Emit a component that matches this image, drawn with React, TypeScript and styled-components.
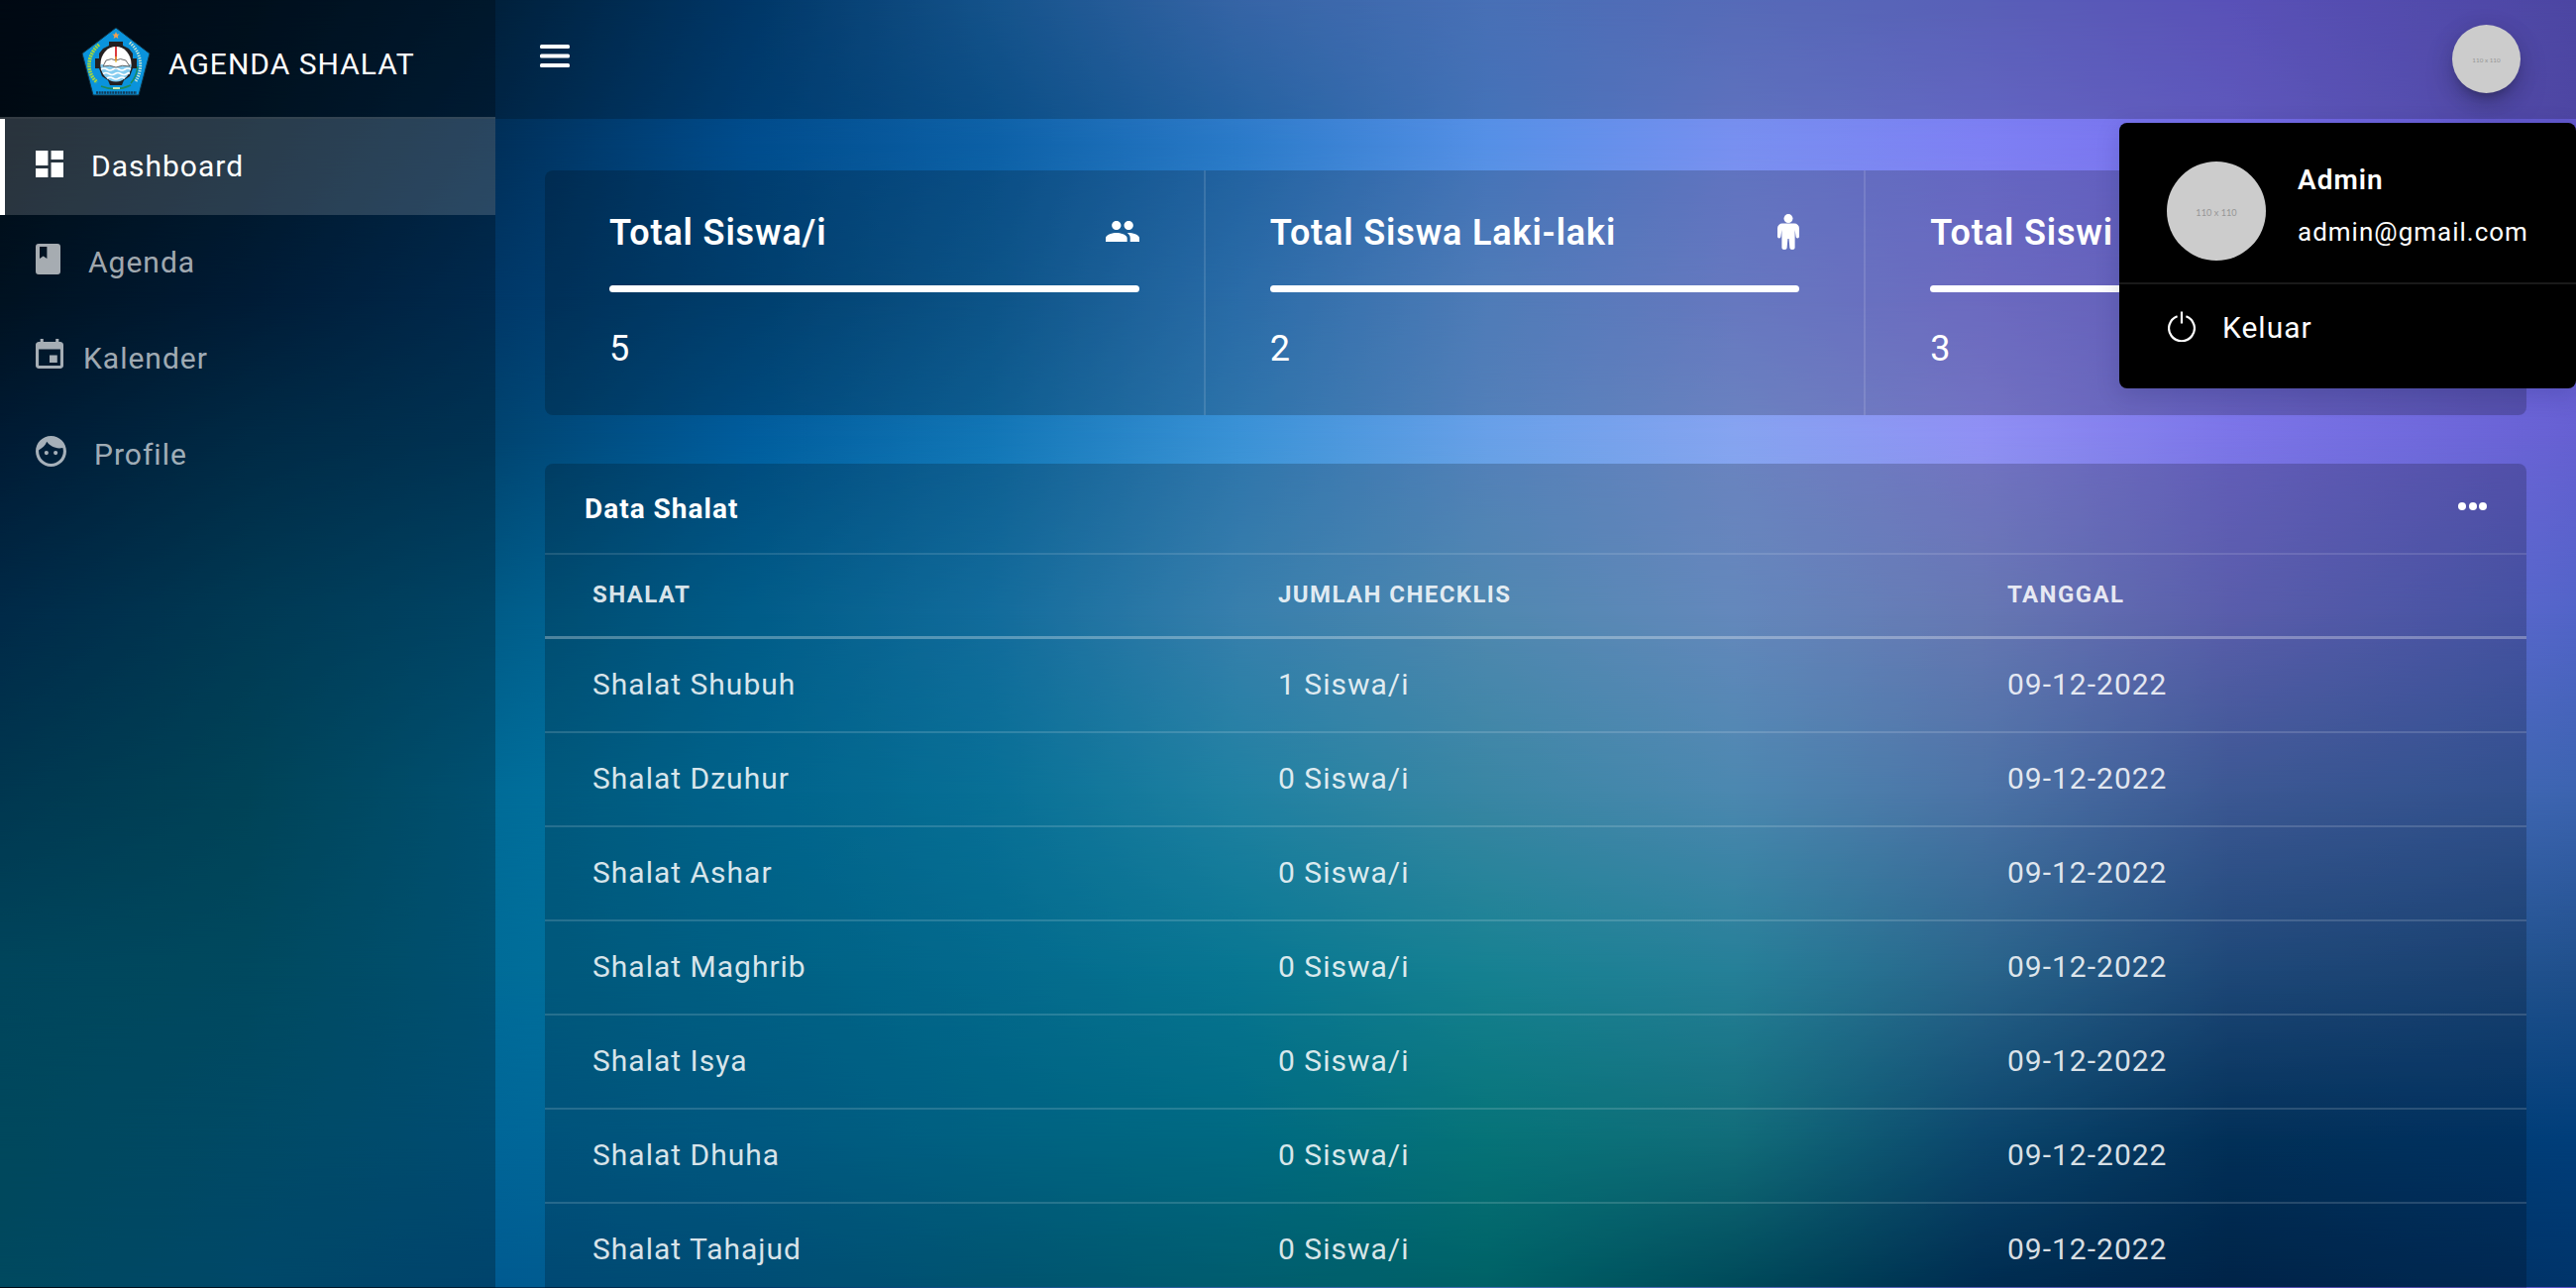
import React from "react";
import styled, { createGlobalStyle } from "styled-components";

const GlobalStyle = createGlobalStyle`
  *, *::before, *::after { box-sizing: border-box; }
  html, body { margin: 0; padding: 0; }
  body {
    background: #000;
    color: #fff;
    font-family: Roboto, "Liberation Sans", sans-serif;
    font-size: 30px;
    letter-spacing: 1px;
    overflow: hidden;
  }
`;

/* ---------- backdrop: horizontal colour bands faded into each other ---------- */

const STOPS = [0, 250, 500, 750, 1000, 1250, 1500, 1750, 2000, 2250, 2600];

const BANDS: { y: number; colors: string[] }[] = [
  { y: 0, colors: ["#001020", "#001a30", "#00294b", "#004480", "#1a68ae", "#447ed0", "#5a8ce4", "#6c86e6", "#7078e6", "#7066e6", "#6058cc"] },
  { y: 145, colors: ["#001220", "#002038", "#00305a", "#004c8c", "#0c60a6", "#2a7ac8", "#5590e6", "#7890f0", "#7e80f4", "#7870ec", "#6258cc"] },
  { y: 300, colors: ["#00182c", "#002548", "#003868", "#004e88", "#1069aa", "#3587d2", "#639be6", "#8096f0", "#8785f0", "#7a74e8", "#685ed2"] },
  { y: 440, colors: ["#002445", "#00385c", "#004470", "#005c9c", "#1276b6", "#3a92d6", "#68a0e8", "#86a4f0", "#9090f4", "#7c75e8", "#6660d2"] },
  { y: 620, colors: ["#003860", "#004d70", "#005c88", "#0073aa", "#1787c3", "#469fd8", "#64aadc", "#7daaeb", "#8096e0", "#7075d6", "#5264c8"] },
  { y: 800, colors: ["#004a6b", "#005a75", "#006c98", "#007cae", "#0a8cbc", "#28a2cb", "#48a8cd", "#5faadc", "#5f90d0", "#4b6eb8", "#3c64b0"] },
  { y: 980, colors: ["#005d7b", "#00627f", "#006c98", "#0078a5", "#0484b0", "#0a94b6", "#1ca2b6", "#2fa0be", "#347eae", "#265a96", "#20508c"] },
  { y: 1150, colors: ["#00607c", "#006388", "#006698", "#006ea0", "#007aa2", "#0084a2", "#089096", "#168898", "#0f5888", "#033c6e", "#003e7a"] },
  { y: 1300, colors: ["#00627f", "#00608c", "#005a90", "#006092", "#00688c", "#00748a", "#007a80", "#005c70", "#003764", "#002d5a", "#00346a"] },
];

const Backdrop = styled.div`
  position: absolute;
  inset: 0;
  z-index: -1;
`;

const Band = styled.div<{ $colors: string[]; $from: number; $to: number }>`
  position: absolute;
  inset: 0;
  background: linear-gradient(
    to right,
    ${(p) => p.$colors.map((c, i) => `${c} ${STOPS[i]}px`).join(", ")}
  );
  mask-image: ${(p) =>
    p.$to > 0
      ? `linear-gradient(to bottom, transparent ${p.$from}px, #000 ${p.$to}px)`
      : "none"};
`;

/* first pixel row of the repeating backdrop */
const RepeatLine = styled(Band)`
  top: auto;
  height: 1px;
`;

/* ---------- shell ---------- */

const Page = styled.div`
  position: relative;
  z-index: 0;
  display: flex;
  width: 2600px;
  height: 1300px;
  overflow: hidden;
`;

const Sidebar = styled.aside`
  flex: none;
  width: 500px;
  background: rgba(0, 0, 0, 0.25);
`;

const Brand = styled.div`
  display: flex;
  align-items: center;
  gap: 18px;
  height: 120px;
  padding: 6px 0 0 82px;
  background: rgba(0, 0, 0, 0.2);
  border-bottom: 2px solid rgba(255, 255, 255, 0.2);
`;

const BrandName = styled.h5`
  margin: 6px 0 0;
  font-size: 30px;
  font-weight: 400;
  line-height: 40px;
  white-space: nowrap;
`;

const Menu = styled.nav`
  display: flex;
  flex-direction: column;
`;

const MenuItem = styled.a<{ $active?: boolean; $gap: number }>`
  display: flex;
  align-items: flex-start;
  gap: ${(p) => p.$gap}px;
  height: 97px;
  padding: 30px 0 0 31px;
  line-height: 36px;
  color: ${(p) => (p.$active ? "#fff" : "rgba(255,255,255,0.65)")};
  background: ${(p) => (p.$active ? "rgba(255,255,255,0.16)" : "transparent")};
  border-left: 5px solid ${(p) => (p.$active ? "#fff" : "transparent")};

  svg { flex: none; }
`;

const Main = styled.main`
  display: flex;
  flex-direction: column;
  flex: 1;
  min-width: 0;
`;

const Header = styled.header`
  position: relative;
  display: flex;
  justify-content: space-between;
  align-items: flex-start;
  flex: none;
  height: 120px;
  padding: 25px 56px 0 45px;
  background: rgba(0, 0, 0, 0.2);
`;

const MenuToggle = styled.button`
  display: flex;
  margin: 20px 0 0;
  padding: 0;
  border: 0;
  background: none;
  color: #fff;
`;

const Avatar = styled.span<{ $size: number; $font: number; $shadow?: boolean }>`
  display: flex;
  flex: none;
  align-items: center;
  justify-content: center;
  width: ${(p) => p.$size}px;
  height: ${(p) => p.$size}px;
  padding-top: 2px;
  border-radius: 50%;
  background: #ccc;
  color: #969696;
  font-family: Lato, Roboto, sans-serif;
  font-size: ${(p) => p.$font}px;
  letter-spacing: 0;
  box-shadow: ${(p) =>
    p.$shadow
      ? "0 16px 38px -12px rgba(0,0,0,.4), 0 4px 25px 0 rgba(0,0,0,.12), 0 8px 10px -5px rgba(0,0,0,.2)"
      : "none"};
`;

const Dropdown = styled.div`
  position: absolute;
  top: 124px;
  right: 0;
  z-index: 2;
  width: 461px;
  height: 268px;
  border-radius: 8px;
  background: #000;
  box-shadow: 0 6px 24px rgba(8, 21, 66, 0.16);
`;

const Account = styled.div`
  display: flex;
  gap: 32px;
  height: 163px;
  padding: 39px 0 0 48px;
  border-bottom: 2px solid rgba(255, 255, 255, 0.1);
`;

const AccountName = styled.h6`
  margin: 2px 0 0;
  font-size: 28px;
  font-weight: 600;
  line-height: 34px;
`;

const AccountMail = styled.p`
  margin: 18px 0 0;
  font-size: 26px;
  line-height: 34px;
`;

const Logout = styled.a`
  display: flex;
  gap: 27px;
  padding: 25px 0 0 49px;
  line-height: 38px;
`;

const Content = styled.div`
  display: flex;
  flex-direction: column;
  gap: 49px;
  padding: 52px 50px 0;
`;

const StatCard = styled.section`
  display: grid;
  grid-template-columns: repeat(3, 1fr);
  height: 247px;
  border-radius: 8px;
  background: rgba(0, 0, 0, 0.2);
`;

const Stat = styled.div`
  padding: 40px 65px 0 65px;
  border-right: 2px solid rgba(255, 255, 255, 0.12);
  &:last-child { border-right: 0; }
`;

const StatHead = styled.div`
  display: flex;
  justify-content: space-between;
  height: 76px;
`;

const StatTitle = styled.h5`
  margin: 0;
  font-size: 36px;
  font-weight: 600;
  letter-spacing: 0.85px;
  line-height: 46px;
  white-space: nowrap;
`;

const StatIcon = styled.span<{ $top: number }>`
  display: flex;
  padding-top: ${(p) => p.$top}px;
`;

const Bar = styled.div`
  height: 7px;
  border-radius: 4px;
  background: #fff;
`;

const StatValue = styled.p`
  margin: 34px 0 0;
  font-size: 36px;
  line-height: 46px;
`;

const TableCard = styled.section`
  height: 900px;
  border-radius: 8px;
  background: rgba(0, 0, 0, 0.2);
`;

const CardHeader = styled.div`
  display: flex;
  justify-content: space-between;
  height: 92px;
  padding: 28px 40px 0 40px;
  border-bottom: 2px solid rgba(255, 255, 255, 0.12);
  font-size: 28px;
  font-weight: 700;
  letter-spacing: 1px;
  line-height: 36px;
`;

const Dots = styled.span`
  display: flex;
  gap: 2.5px;
  padding-top: 11px;
`;

const Dot = styled.i`
  width: 8px;
  height: 8px;
  border-radius: 50%;
  background: #fff;
`;

const Row = styled.div<{ $head?: boolean }>`
  display: grid;
  grid-template-columns: 692px 736px 1fr;
  height: ${(p) => (p.$head ? 85 : 95)}px;
  padding: ${(p) => (p.$head ? 22 : 28)}px 0 0 48px;
  border-bottom: ${(p) =>
    p.$head ? "3px solid rgba(255,255,255,.3)" : "2px solid rgba(255,255,255,.15)"};
  color: rgba(255, 255, 255, 0.85);
  font-size: ${(p) => (p.$head ? 24 : 30)}px;
  font-weight: ${(p) => (p.$head ? 700 : 400)};
  letter-spacing: ${(p) => (p.$head ? 1.4 : 1)}px;
  line-height: 36px;
`;

/* ---------- icons ---------- */

type IconProps = { w: number; h: number; box: string; children: React.ReactNode; dy?: number };

const Glyph = styled.svg<{ $dy: number }>`
  display: block;
  margin-top: ${(p) => p.$dy}px;
  fill: currentColor;
`;

const Icon = ({ w, h, box, children, dy = 0 }: IconProps) => (
  <Glyph width={w} height={h} viewBox={box} preserveAspectRatio="none" $dy={dy}>
    {children}
  </Glyph>
);

const DashboardIcon = () => (
  <Icon w={28} h={27} box="3 3 18 18" dy={2}>
    <path d="M3 13h8V3H3v10zm0 8h8v-6H3v6zm10 0h8V11h-8v10zm0-18v6h8V3h-8z" />
  </Icon>
);

const AgendaIcon = () => (
  <Icon w={25} h={31} box="0 0 25 31" dy={-1}>
    <path
      fillRule="evenodd"
      d="M3 0H22A3 3 0 0 1 25 3V28A3 3 0 0 1 22 31H3A3 3 0 0 1 0 28V3A3 3 0 0 1 3 0ZM4 3V15L7.7 12.6L11.4 15V3Z"
    />
  </Icon>
);

const CalendarIcon = () => (
  <Icon w={28} h={30} box="3 1 18 20" dy={-2}>
    <path d="M17 12h-5v5h5v-5zM16 1v2H8V1H6v2H5c-1.11 0-1.99.9-1.99 2L3 19c0 1.1.89 2 2 2h14c1.1 0 2-.9 2-2V5c0-1.1-.9-2-2-2h-1V1h-2zm3 18H5V8h14v11z" />
  </Icon>
);

const FaceIcon = () => (
  <Icon w={31} h={31} box="2 2 20 20" dy={-1}>
    <circle cx="9" cy="13" r="1.35" />
    <circle cx="15" cy="13" r="1.35" />
    <path d="M12 2C6.48 2 2 6.48 2 12s4.480 10 10 10 10-4.480 10-10S17.520 2 12 2zm0 18c-4.410 0-8-3.590-8-8 0-.29.02-.58.05-.86 2.360-1.050 4.230-2.980 5.210-5.370C11.070 8.330 14.050 10 17.420 10c.78 0 1.530-.09 2.250-.26.21.71.33 1.470.33 2.260 0 4.410-3.590 8-8 8z" />
  </Icon>
);

const PeopleIcon = () => (
  <Icon w={34} h={21} box="1 5 22 14">
    <path d="M16 11c1.660 0 2.990-1.340 2.990-3S17.660 5 16 5c-1.660 0-3 1.340-3 3s1.340 3 3 3zm-8 0c1.660 0 2.990-1.340 2.990-3S9.660 5 8 5C6.340 5 5 6.340 5 8s1.340 3 3 3zm0 2c-2.330 0-7 1.170-7 3.500V19h14v-2.500c0-2.330-4.670-3.500-7-3.500zm8 0c-.29 0-.62.02-.97.05 1.160.84 1.970 1.970 1.970 3.450V19h6v-2.500c0-2.330-4.670-3.500-7-3.500z" />
  </Icon>
);

const MaleIcon = () => (
  <Icon w={22} h={36} box="0 0 22 36">
    <circle cx="11" cy="4.600" r="4.500" />
    <path d="M5 9.500H17A5 5 0 0 1 22 14.500V22.700A1.700 1.700 0 0 1 18.600 22.700L17.600 16V34.200A2.600 1.800 0 0 1 12.400 34.200L11.600 25H10.400L9.600 34.200A2.600 1.800 0 0 1 4.400 34.200V16L3.400 22.700A1.700 1.700 0 0 1 0 22.700V14.500A5 5 0 0 1 5 9.500Z" />
  </Icon>
);

const PowerIcon = () => (
  <Icon w={28} h={31} box="0 0 28 31" dy={2}>
    <path
      d="M9.600 5.200A12.900 12.900 0 1 0 18.400 5.200M14 0.500V12.500"
      fill="none"
      stroke="currentColor"
      strokeWidth="2.200"
    />
  </Icon>
);

const BarsIcon = () => (
  <Icon w={30} h={23} box="0 0 30 23">
    <rect width="30" height="4" rx="1.500" />
    <rect y="9.500" width="30" height="4" rx="1.500" />
    <rect y="19" width="30" height="4" rx="1.500" />
  </Icon>
);

const Crest = () => (
  <svg width="70" height="70" viewBox="0 0 70 70">
    <path d="M35 1L69 27L58 69H12L1 27Z" fill="#0a93dc" stroke="#12313f" strokeWidth="1" />
    <path d="M35 5l1.100 2.400 2.600.2-2 1.700.7 2.600-2.400-1.400-2.400 1.400.7-2.600-2-1.700 2.600-.2Z" fill="#f0a050" />
    <path d="M18 18C5 29 5 47 16 56" fill="none" stroke="#a8d83a" strokeWidth="3.600" strokeDasharray="1.800 0.900" />
    <path d="M49 16C62 27 62 44 55 55" fill="none" stroke="#d8ecd0" strokeWidth="3" strokeDasharray="1.300 1.300" />
    <path d="M57 40Q56 50 50 57" fill="none" stroke="#1c8a5c" strokeWidth="1.600" />
    <path d="M20 60Q35 66 50 59" fill="none" stroke="#1c8a5c" strokeWidth="1.600" />
    <path
      d="M28 15H42V19L48 22L52 27V32H56V42H52L49 50L43 54L41 59H29L27 54L21 50L18 42H14V32H18V27L22 22L28 19Z"
      fill="#231f20"
    />
    <ellipse cx="35" cy="37.500" rx="15.500" ry="17.500" fill="#fff" />
    <path d="M19.500 38H50.500A15.500 17.500 0 0 1 19.500 38Z" fill="#86cdf0" />
    <g fill="none" stroke="#fff" strokeWidth="1.700">
      <path d="M20 43q3-2 6 0t6 0t6 0t6 0t6 0" />
      <path d="M22 47.500q3-2 6 0t6 0t6 0t6 0t2 0" />
      <path d="M26 52q3-2 6 0t6 0t6 0" />
    </g>
    <path d="M22 40L25 34Q31 31 35 34Q39 31 45 34L49 40Q41 38 35 41Q29 38 22 40Z" fill="#fff" stroke="#555" strokeWidth="0.900" />
    <path d="M35 20V34" stroke="#d8232a" strokeWidth="1.800" />
    <path d="M35 30V36" stroke="#e8c030" strokeWidth="1.200" />
    <rect x="32" y="61" width="7" height="2" fill="#c8e8b0" />
    <path d="M15 66.500H56" stroke="#123a56" strokeWidth="2.600" strokeDasharray="2 0.700" />
  </svg>
);

/* ---------- data ---------- */

const MENU = [
  { label: "Dashboard", icon: <DashboardIcon />, gap: 28, active: true },
  { label: "Agenda", icon: <AgendaIcon />, gap: 28 },
  { label: "Kalender", icon: <CalendarIcon />, gap: 20 },
  { label: "Profile", icon: <FaceIcon />, gap: 28 },
];

const STATS = [
  { title: "Total Siswa/i", value: 5, icon: <PeopleIcon />, top: 11 },
  { title: "Total Siswa Laki-laki", value: 2, icon: <MaleIcon />, top: 4 },
  { title: "Total Siswi", value: 3, icon: null, top: 4 },
];

const PRAYERS: [string, number][] = [
  ["Shubuh", 1],
  ["Dzuhur", 0],
  ["Ashar", 0],
  ["Maghrib", 0],
  ["Isya", 0],
  ["Dhuha", 0],
  ["Tahajud", 0],
];

export default function App() {
  return (
    <>
      <GlobalStyle />
      <Page>
        <Backdrop>
          {BANDS.map((b, i) => (
            <Band key={b.y} $colors={b.colors} $from={i ? BANDS[i - 1].y : 0} $to={b.y} />
          ))}
          <RepeatLine $colors={BANDS[0].colors} $from={0} $to={0} />
        </Backdrop>

        <Sidebar>
          <Brand>
            <Crest />
            <BrandName>AGENDA SHALAT</BrandName>
          </Brand>
          <Menu>
            {MENU.map((m) => (
              <MenuItem key={m.label} $active={m.active} $gap={m.gap}>
                {m.icon}
                <span>{m.label}</span>
              </MenuItem>
            ))}
          </Menu>
        </Sidebar>

        <Main>
          <Header>
            <MenuToggle aria-label="Menu">
              <BarsIcon />
            </MenuToggle>
            <Avatar $size={69} $font={6.3} $shadow>
              110 x 110
            </Avatar>
            <Dropdown>
              <Account>
                <Avatar $size={100} $font={9.2}>
                  110 x 110
                </Avatar>
                <div>
                  <AccountName>Admin</AccountName>
                  <AccountMail>admin@gmail.com</AccountMail>
                </div>
              </Account>
              <Logout>
                <PowerIcon />
                Keluar
              </Logout>
            </Dropdown>
          </Header>

          <Content>
            <StatCard>
              {STATS.map((s) => (
                <Stat key={s.title}>
                  <StatHead>
                    <StatTitle>{s.title}</StatTitle>
                    <StatIcon $top={s.top}>{s.icon}</StatIcon>
                  </StatHead>
                  <Bar />
                  <StatValue>{s.value}</StatValue>
                </Stat>
              ))}
            </StatCard>

            <TableCard>
              <CardHeader>
                Data Shalat
                <Dots>
                  <Dot />
                  <Dot />
                  <Dot />
                </Dots>
              </CardHeader>
              <Row $head>
                <span>SHALAT</span>
                <span>JUMLAH CHECKLIS</span>
                <span>TANGGAL</span>
              </Row>
              {PRAYERS.map(([name, count]) => (
                <Row key={name}>
                  <span>Shalat {name}</span>
                  <span>{count} Siswa/i</span>
                  <span>09-12-2022</span>
                </Row>
              ))}
            </TableCard>
          </Content>
        </Main>
      </Page>
    </>
  );
}
